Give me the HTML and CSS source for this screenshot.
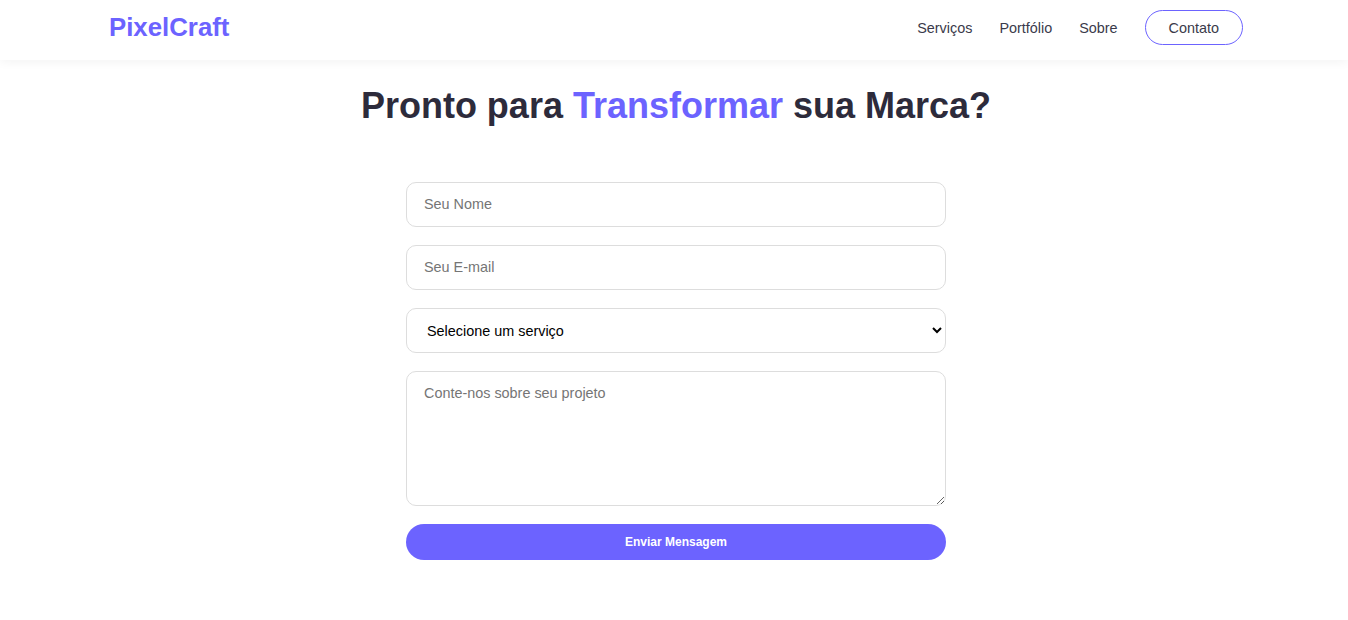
FILE: index.html
```html
<!DOCTYPE html>
<html lang="pt-BR">
<head>
<meta charset="utf-8">
<title>PixelCraft</title>
<link rel="stylesheet" href="styles.css">
</head>
<body>
<header class="site-header">
  <div class="header-inner">
    <a class="logo" href="#">PixelCraft</a>
    <nav class="nav">
      <a class="nav-link" href="#">Serviços</a>
      <a class="nav-link" href="#">Portfólio</a>
      <a class="nav-link" href="#">Sobre</a>
      <a class="nav-btn" href="#">Contato</a>
    </nav>
  </div>
</header>
<main class="contact">
  <h1 class="title">Pronto para <span class="accent">Transformar</span> sua Marca?</h1>
  <form class="form">
    <input class="field" type="text" placeholder="Seu Nome">
    <input class="field" type="email" placeholder="Seu E-mail">
    <select class="field select">
      <option>Selecione um serviço</option>
      <option>Branding</option>
      <option>Web Design</option>
    </select>
    <textarea class="field area" placeholder="Conte-nos sobre seu projeto"></textarea>
    <button class="submit" type="button">Enviar Mensagem</button>
  </form>
</main>
</body>
</html>
```

FILE: styles.css
```css
* { box-sizing: border-box; }
html, body { margin: 0; padding: 0; }
body {
  font-family: "Liberation Sans", Arial, sans-serif;
  background: #ffffff;
  color: #2d2b3b;
}
.site-header {
  height: 60px;
  background: #fff;
  box-shadow: 0 2px 10px rgba(0, 0, 0, 0.05);
}
.header-inner {
  max-width: 1200px;
  margin: 0 auto;
  padding: 0 32px;
  height: 100%;
  display: flex;
  align-items: center;
  justify-content: space-between;
}
.logo {
  font-size: 25.8px;
  font-weight: 700;
  color: #6c63ff;
  text-decoration: none;
  margin-top: -5px;
  margin-left: 3px;
}
.nav {
  display: flex;
  align-items: center;
  gap: 27px;
  margin-top: -5px;
  margin-right: -1px;
}
.nav-link {
  font-size: 14.4px;
  color: #3a3a4a;
  text-decoration: none;
}
.nav-btn {
  font-size: 14.4px;
  color: #3a3a4a;
  text-decoration: none;
  border: 1px solid #6c63ff;
  border-radius: 50px;
  padding: 9px 23px 7px;
  line-height: 17px;
}
.contact {
  padding: 25px 0 40px 4px;
  display: flex;
  flex-direction: column;
  align-items: center;
}
.title {
  margin: 0 0 55px;
  font-size: 36px;
  line-height: 42px;
  font-weight: 700;
  color: #2d2b3b;
}
.accent { color: #6c63ff; }
.form {
  width: 540px;
  display: flex;
  flex-direction: column;
  gap: 18px;
}
.field {
  display: block;
  width: 100%;
  height: 45px;
  padding: 13px 17px 14px;
  border: 1px solid #dddddd;
  border-radius: 10px;
  font-family: "Liberation Sans", Arial, sans-serif;
  font-size: 14.4px;
  line-height: 16px;
  color: #222;
  background: #fff;
  outline: none;
}
.select {
  padding: 0 12px 0 16px;
  color: #000;
}
.area {
  height: 135px;
  resize: both;
  padding-top: 13px;
}
.submit {
  height: 36px;
  width: 100%;
  border: none;
  border-radius: 50px;
  background: #6c63ff;
  color: #fff;
  font-family: "Liberation Sans", Arial, sans-serif;
  font-weight: 700;
  font-size: 12px;
  cursor: pointer;
}
```
